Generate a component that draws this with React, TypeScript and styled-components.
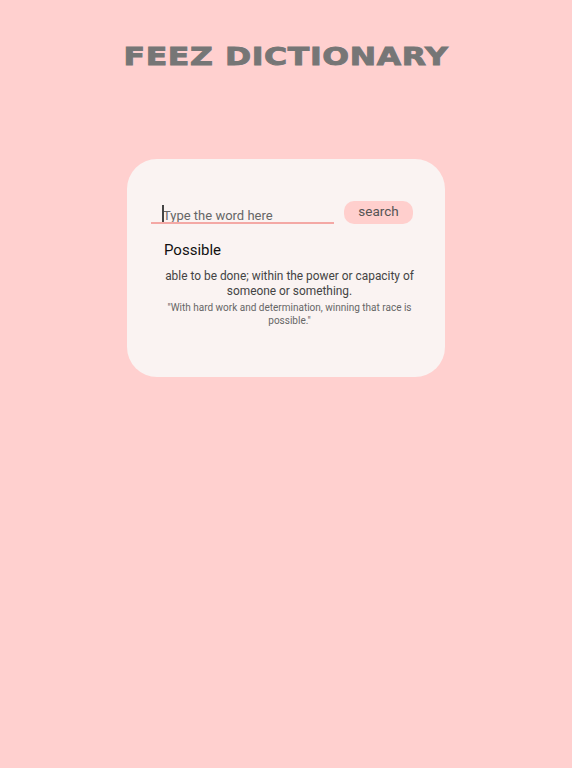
import React from "react";
import styled, { createGlobalStyle } from "styled-components";

const Global = createGlobalStyle`
  html, body { margin: 0; padding: 0; background: #ffd0cf; }
  body { font-family: Roboto, "Liberation Sans", sans-serif; }
`;

const Page = styled.div`
  min-height: 768px;
  display: flex;
  flex-direction: column;
  align-items: center;
  padding-top: 43px;
  box-sizing: border-box;
`;

const Title = styled.h1`
  margin: 0;
  font-family: "DejaVu Sans", sans-serif;
  font-weight: 700;
  font-size: 25px;
  line-height: 28px;
  letter-spacing: 0.5px;
  color: #767676;
  -webkit-text-stroke: 0.9px #767676;
  transform: scaleX(1.26);
`;

const Card = styled.div`
  margin-top: 88px;
  width: 318px;
  height: 218px;
  background: #faf3f2;
  border-radius: 30px;
  box-sizing: border-box;
  padding: 42px 17px 0 24px;
  display: flex;
  flex-direction: column;
`;

const SearchRow = styled.div`
  display: flex;
  align-items: flex-start;
  gap: 10px;
`;

const InputWrap = styled.div`
  position: relative;
  width: 183px;
  margin-top: 1px;
  border-bottom: 2px solid #f4a8a5;
`;

const Input = styled.input`
  display: block;
  width: 100%;
  height: 20px;
  box-sizing: border-box;
  border: none;
  background: transparent;
  outline: none;
  padding: 6px 0 0 12px;
  font-family: Roboto, sans-serif;
  font-size: 13px;
  line-height: 14px;
  color: #555;
  &::placeholder { color: #666; }
`;

const Caret = styled.span`
  position: absolute;
  left: 11px;
  top: 3px;
  width: 1.5px;
  height: 17px;
  background: #444;
`;

const SearchButton = styled.button`
  width: 69px;
  height: 23px;
  border: none;
  border-radius: 10px;
  background: #ffcfcd;
  color: #555;
  font-family: Roboto, sans-serif;
  font-size: 13.5px;
  padding: 0 0 3px;
  cursor: pointer;
`;

const Word = styled.div`
  margin: 16px 0 0 13px;
  font-size: 15px;
  line-height: 20px;
  color: #111;
`;

const Definition = styled.p`
  margin: 9px 0 0 0;
  padding: 0 8px;
  text-align: center;
  font-size: 11.9px;
  line-height: 15px;
  color: #444;
`;

const Example = styled.p`
  margin: 2px 0 0 0;
  padding: 0 10px;
  text-align: center;
  font-size: 10px;
  line-height: 13px;
  color: #666;
`;

export default function App() {
  return (
    <>
      <Global />
      <Page>
        <Title>FEEZ DICTIONARY</Title>
        <Card>
          <SearchRow>
            <InputWrap>
              <Caret />
              <Input placeholder="Type the word here" />
            </InputWrap>
            <SearchButton>search</SearchButton>
          </SearchRow>
          <Word>Possible</Word>
          <Definition>
            able to be done; within the power or capacity of someone or something.
          </Definition>
          <Example>
            "With hard work and determination, winning that race is possible."
          </Example>
        </Card>
      </Page>
    </>
  );
}
